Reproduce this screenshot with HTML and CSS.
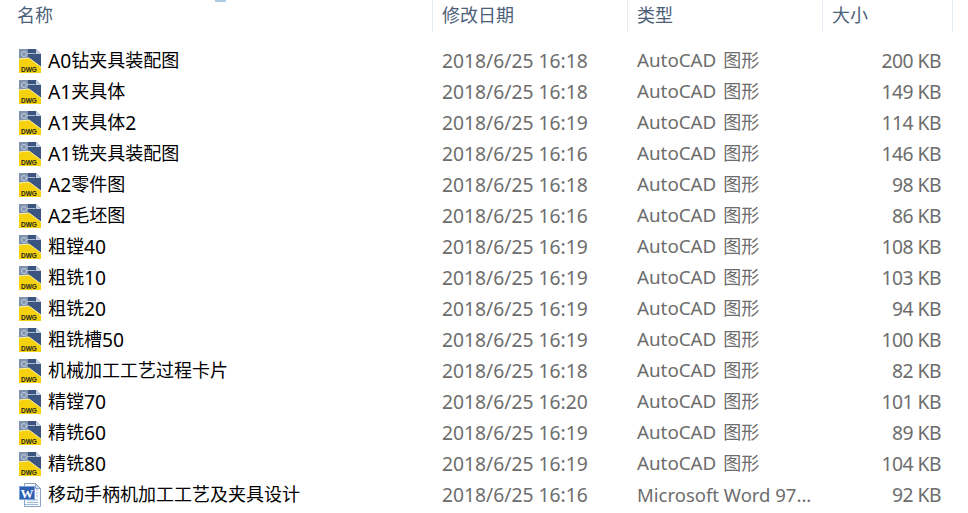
FILE: index.html
```html
<!DOCTYPE html>
<html lang="zh-CN">
<head>
    <meta charset="UTF-8">
    <title>文件列表</title>
    <link rel="stylesheet" href="styles.css">
</head>
<body>
    <svg class="sprites">
        <symbol id="dwg" viewBox="0 0 24 24">
            <path d="M1 0h17l5 5v19H1z" fill="#3B5580"/>
            <path d="M1 0h9v11l-9-1z" fill="#7F93AE"/>
            <path d="M18 0l5 5h-5z" fill="#C6D2E2"/>
            <circle cx="6" cy="5" r="2.500" fill="none" stroke="#C5D0DE"/>
            <path d="M8.500 4.500h9" stroke="#A9B9CE"/>
            <path d="M1 10l10-1 12 9v6H1z" fill="#F5D20D"/>
            <path d="M1 10l10-1 12 9" fill="none" stroke="#FFF2A0"/>
            <text x="3" y="22.500" class="dwg-label">DWG</text>
        </symbol>
        <symbol id="doc" viewBox="0 0 24 24">
            <path d="M6.500 .5h11l5 5v18h-16z" fill="#F7FAFE" stroke="#8BA4C4"/>
            <path d="M17.500 .5l5 5h-5z" fill="#C7D8EC" stroke="#8BA4C4"/>
            <path d="M9 17h11M9 19.500h11M7 21.500h13M18 7h2M18 10h2M18 13h2" stroke="#9DB8D8"/>
            <rect x="1" y="3" width="16" height="14" fill="#2D5FB0"/>
            <rect x="1.500" y="3.500" width="15" height="13" fill="none" stroke="#7FA3D6"/>
            <text x="2.500" y="14.500" class="doc-label">W</text>
        </symbol>
    </svg>

    <div class="scrap"></div>

    <div class="list">
        <div class="header">
            <div class="head-cell head-name">名称</div>
            <div class="head-cell">修改日期</div>
            <div class="head-cell">类型</div>
            <div class="head-cell">大小</div>
        </div>

        <div class="rows">
            <div class="row"><span class="name"><svg class="icon"><use href="#dwg"/></svg><span class="en">A0</span>钻夹具装配图</span><span class="date">2018/6/25 16:18</span><span class="type">AutoCAD <span class="cn">图形</span></span><span class="size">200 KB</span></div>
            <div class="row"><span class="name"><svg class="icon"><use href="#dwg"/></svg><span class="en">A1</span>夹具体</span><span class="date">2018/6/25 16:18</span><span class="type">AutoCAD <span class="cn">图形</span></span><span class="size">149 KB</span></div>
            <div class="row"><span class="name"><svg class="icon"><use href="#dwg"/></svg><span class="en">A1</span>夹具体<span class="en">2</span></span><span class="date">2018/6/25 16:19</span><span class="type">AutoCAD <span class="cn">图形</span></span><span class="size">114 KB</span></div>
            <div class="row"><span class="name"><svg class="icon"><use href="#dwg"/></svg><span class="en">A1</span>铣夹具装配图</span><span class="date">2018/6/25 16:16</span><span class="type">AutoCAD <span class="cn">图形</span></span><span class="size">146 KB</span></div>
            <div class="row"><span class="name"><svg class="icon"><use href="#dwg"/></svg><span class="en">A2</span>零件图</span><span class="date">2018/6/25 16:18</span><span class="type">AutoCAD <span class="cn">图形</span></span><span class="size">98 KB</span></div>
            <div class="row"><span class="name"><svg class="icon"><use href="#dwg"/></svg><span class="en">A2</span>毛坯图</span><span class="date">2018/6/25 16:16</span><span class="type">AutoCAD <span class="cn">图形</span></span><span class="size">86 KB</span></div>
            <div class="row"><span class="name"><svg class="icon"><use href="#dwg"/></svg>粗镗<span class="en">40</span></span><span class="date">2018/6/25 16:19</span><span class="type">AutoCAD <span class="cn">图形</span></span><span class="size">108 KB</span></div>
            <div class="row"><span class="name"><svg class="icon"><use href="#dwg"/></svg>粗铣<span class="en">10</span></span><span class="date">2018/6/25 16:19</span><span class="type">AutoCAD <span class="cn">图形</span></span><span class="size">103 KB</span></div>
            <div class="row"><span class="name"><svg class="icon"><use href="#dwg"/></svg>粗铣<span class="en">20</span></span><span class="date">2018/6/25 16:19</span><span class="type">AutoCAD <span class="cn">图形</span></span><span class="size">94 KB</span></div>
            <div class="row"><span class="name"><svg class="icon"><use href="#dwg"/></svg>粗铣槽<span class="en">50</span></span><span class="date">2018/6/25 16:19</span><span class="type">AutoCAD <span class="cn">图形</span></span><span class="size">100 KB</span></div>
            <div class="row"><span class="name"><svg class="icon"><use href="#dwg"/></svg>机械加工工艺过程卡片</span><span class="date">2018/6/25 16:18</span><span class="type">AutoCAD <span class="cn">图形</span></span><span class="size">82 KB</span></div>
            <div class="row"><span class="name"><svg class="icon"><use href="#dwg"/></svg>精镗<span class="en">70</span></span><span class="date">2018/6/25 16:20</span><span class="type">AutoCAD <span class="cn">图形</span></span><span class="size">101 KB</span></div>
            <div class="row"><span class="name"><svg class="icon"><use href="#dwg"/></svg>精铣<span class="en">60</span></span><span class="date">2018/6/25 16:19</span><span class="type">AutoCAD <span class="cn">图形</span></span><span class="size">89 KB</span></div>
            <div class="row"><span class="name"><svg class="icon"><use href="#dwg"/></svg>精铣<span class="en">80</span></span><span class="date">2018/6/25 16:19</span><span class="type">AutoCAD <span class="cn">图形</span></span><span class="size">104 KB</span></div>
            <div class="row"><span class="name"><svg class="icon"><use href="#doc"/></svg>移动手柄机加工工艺及夹具设计</span><span class="date">2018/6/25 16:16</span><span class="type word">Microsoft Word 97...</span><span class="size">92 KB</span></div>
        </div>
    </div>
</body>
</html>
```

FILE: styles.css
```css
body {
    margin: 0;
    height: 513px;
    overflow: hidden;
    background-color: #FFFFFF;
    font-family: 'Noto Sans', 'Noto Sans CJK SC', sans-serif;
    font-size: 18px;
    color: #6D6D6D;
}

.sprites {
    display: none;
}

.dwg-label {
    font-family: 'Liberation Sans', sans-serif;
    font-size: 6.500px;
    font-weight: 700;
    fill: #222;
}

.doc-label {
    font-family: 'Liberation Serif', serif;
    font-size: 13px;
    font-weight: 700;
    fill: #fff;
}

/* bit of the window behind, cut off by the top edge */
.scrap {
    position: absolute;
    left: 215px;
    top: 0;
    width: 11px;
    height: 2px;
    background-color: #A9CBE6;
}

.header,
.row {
    display: grid;
    grid-template-columns: 432px 195px 195px 131px;
}

.header {
    height: 32px;
}

.head-cell {
    padding-left: 9px;
    line-height: 31px;
    color: #4C607A;
    border-left: 1px solid #E3EBF5;
    box-sizing: border-box;
}

.head-cell:last-child {
    border-right: 1px solid #E3EBF5;
}

.head-name {
    padding-left: 17px;
    border-left: none;
}

.rows {
    padding-top: 13px;
}

.row {
    height: 31px;
    line-height: 31px;
    white-space: nowrap;
}

.name {
    display: flex;
    align-items: center;
    padding-left: 18px;
    color: #000;
}

.en {
    font-size: 19.300px;
}

.icon {
    width: 24px;
    height: 24px;
    margin-right: 6px;
}

.date,
.type {
    padding-left: 10px;
}

.date {
    font-size: 19.300px;
}

.type {
    font-size: 18.800px;
}

.type.word {
    font-size: 18.500px;
}

.cn {
    font-size: 18px;
    margin-left: 2px;
}

.size {
    padding-right: 12px;
    text-align: right;
    font-size: 19.300px;
    letter-spacing: -0.500px;
}
```
